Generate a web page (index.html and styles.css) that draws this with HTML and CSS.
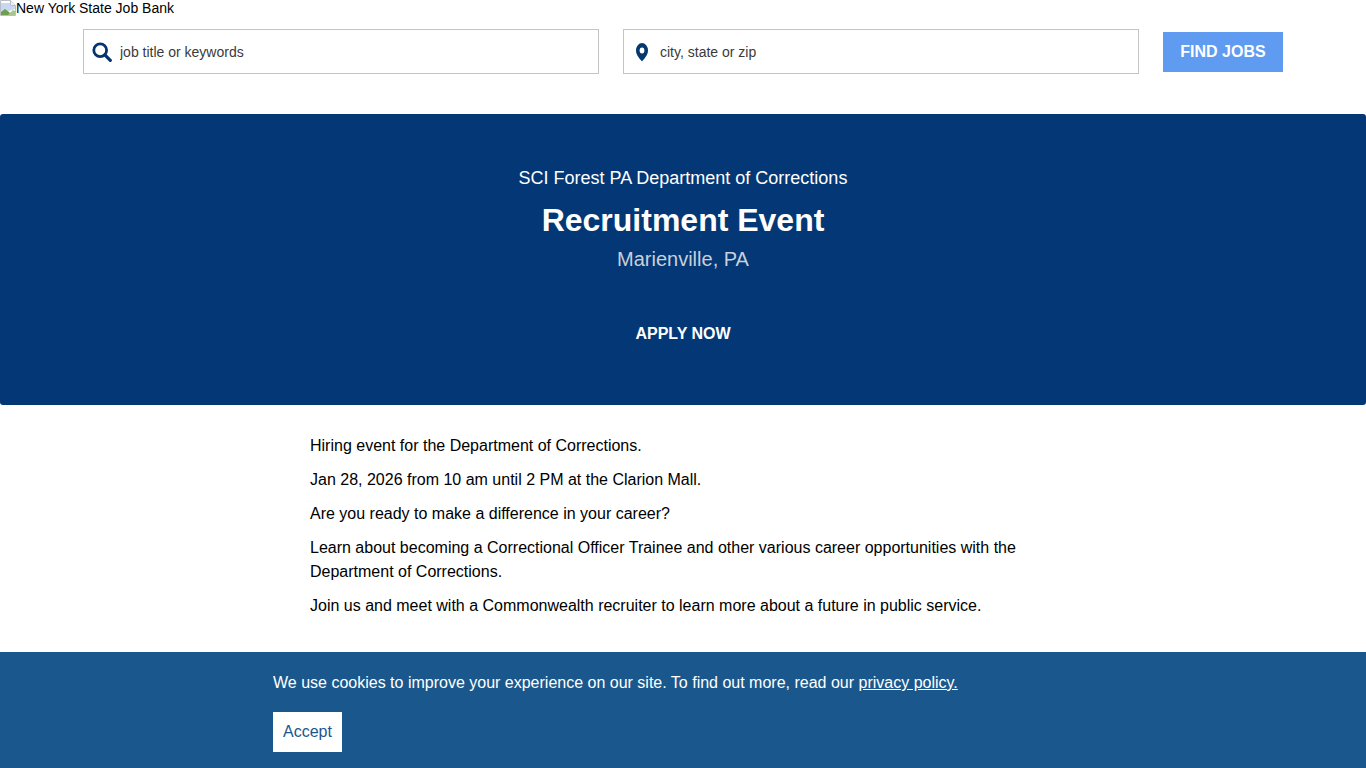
FILE: index.html
```html
<!DOCTYPE html>
<html lang="en">
<head>
  <meta charset="UTF-8">
  <meta name="viewport" content="width=device-width, initial-scale=1.0">
  <title>Recruitment Event - New York State Job Bank</title>
  <link rel="stylesheet" href="styles.css">
</head>
<body>
  <header class="site-header">
    <div class="logo">
      <svg class="broken-img" width="16" height="16" viewBox="0 0 16 16" aria-hidden="true">
        <path d="M.5.5h10l5 5v10H.5z" fill="#fff" stroke="#b9bdc4"/>
        <path d="M10.500.5v5h5" fill="#eef1f6" stroke="#b9bdc4"/>
        <path d="M1 3h9v3h5v3L9 11l-8 1z" fill="#c9d7f0"/>
        <path d="M1 15v-3l4-3 4 3 3 3z" fill="#6f9e4f"/>
        <path d="M8 15l5-5 2 1v4z" fill="#a7c48a"/>
      </svg><span>New York State Job Bank</span>
    </div>
    <form class="search">
      <div class="field">
        <svg class="field-icon" width="20" height="20" viewBox="0 0 20 20" aria-hidden="true">
          <circle cx="8.200" cy="8.200" r="6.400" fill="none" stroke="#04346f" stroke-width="2.800"/>
          <path d="M12.800 12.800l5.500 5.500" stroke="#04346f" stroke-width="3.200" stroke-linecap="round"/>
        </svg>
        <input type="text" placeholder="job title or keywords">
      </div>
      <div class="field">
        <svg class="field-icon" width="20" height="20" viewBox="0 0 20 20" aria-hidden="true">
          <path fill-rule="evenodd" d="M10 1a7.500 7.500 0 0 0-7.500 7.500C2.500 13 7 16.500 10 19.500c3-3 7.500-6.500 7.500-11A7.500 7.500 0 0 0 10 1zm0 4.500a3 3 0 1 1 0 6 3 3 0 0 1 0-6z" fill="#04386f" transform="translate(2 0) scale(.8 1)"/>
        </svg>
        <input type="text" placeholder="city, state or zip">
      </div>
      <button type="button" class="find-btn">FIND JOBS</button>
    </form>
  </header>

  <section class="hero">
    <p class="hero-org">SCI Forest PA Department of Corrections</p>
    <h1>Recruitment Event</h1>
    <p class="hero-place">Marienville, PA</p>
    <a class="apply" href="#">APPLY NOW</a>
  </section>

  <main class="description">
    <p>Hiring event for the Department of Corrections.</p>
    <p>Jan 28, 2026 from 10 am until 2 PM at the Clarion Mall.</p>
    <p>Are you ready to make a difference in your career?</p>
    <p>Learn about becoming a Correctional Officer Trainee and other various career opportunities with the Department of Corrections.</p>
    <p>Join us and meet with a Commonwealth recruiter to learn more about a future in public service.</p>
  </main>

  <div class="cookie-bar">
    <p>We use cookies to improve your experience on our site. To find out more, read our <a href="#">privacy policy.</a></p>
    <button type="button" class="accept">Accept</button>
  </div>
</body>
</html>
```

FILE: styles.css
```css
html, body {
  height: 100%;
}
body {
  margin: 0;
  font-family: "Liberation Sans", Arial, sans-serif;
  color: #000;
  background: #fff;
  overflow: hidden;
}
.logo {
  display: flex;
  align-items: flex-start;
  height: 18px;
  font-size: 14px;
  line-height: 17px;
}
.broken-img {
  flex: none;
}
.search {
  display: flex;
  align-items: center;
  gap: 24px;
  margin: 11px 83px 0;
  height: 45px;
}
.field {
  display: flex;
  align-items: center;
  flex: none;
  width: 516px;
  height: 45px;
  box-sizing: border-box;
  padding-left: 8px;
  border: 1px solid #c4c4c4;
}
.field-icon {
  flex: none;
  margin-right: 8px;
}
.field input {
  flex: 1;
  min-width: 0;
  border: none;
  outline: none;
  padding: 0;
  font-family: inherit;
  font-size: 14px;
  color: #333;
}
.field input::placeholder {
  color: #3a3a3a;
  opacity: 1;
}
.find-btn {
  flex: none;
  width: 120px;
  height: 40px;
  border: none;
  background: #5f9bf0;
  color: #fff;
  font-family: inherit;
  font-size: 16px;
  font-weight: bold;
  cursor: pointer;
}
.hero {
  margin-top: 40px;
  height: 291px;
  box-sizing: border-box;
  padding-top: 52px;
  background: #033776;
  border-radius: 3px;
  color: #fff;
  text-align: center;
}
.hero-org {
  margin: 0;
  font-size: 18px;
  line-height: 24px;
}
.hero h1 {
  margin: 10px 0 0;
  font-size: 32px;
  line-height: 40px;
  font-weight: bold;
}
.hero-place {
  margin: 6px 0 0;
  font-size: 20px;
  line-height: 26px;
  color: #c9d0da;
}
.apply {
  display: inline-block;
  margin-top: 50px;
  color: #fff;
  font-size: 16px;
  line-height: 24px;
  font-weight: bold;
  text-decoration: none;
}
.description {
  width: 746px;
  margin: 29px 0 0 310px;
  font-size: 16px;
  line-height: 24px;
}
.description p {
  margin: 0 0 10px;
}
.cookie-bar {
  position: fixed;
  left: 0;
  right: 0;
  bottom: 0;
  height: 116px;
  box-sizing: border-box;
  padding: 19px 0 0 273px;
  background: #1a578c;
  color: #fff;
  font-size: 16px;
  line-height: 24px;
}
.cookie-bar p {
  margin: 0 0 17px;
}
.cookie-bar a {
  color: #fff;
}
.accept {
  display: block;
  width: 69px;
  height: 40px;
  padding: 0;
  border: none;
  background: #fff;
  color: #1a578c;
  font-family: inherit;
  font-size: 16px;
  cursor: pointer;
}
```
